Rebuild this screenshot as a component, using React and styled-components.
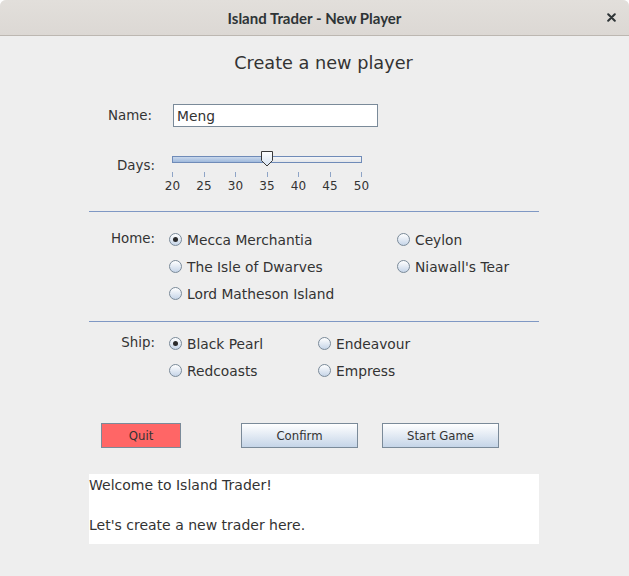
import { useState } from "react";
import styled, { createGlobalStyle } from "styled-components";

const GlobalStyle = createGlobalStyle`
  html, body {
    margin: 0;
    padding: 0;
    background: #ffffff;
  }
  body {
    font-family: "DejaVu Sans", "Liberation Sans", sans-serif;
    color: #333333;
  }
`;

const homes = [
  { id: "mecca", name: "Mecca Merchantia" },
  { id: "ceylon", name: "Ceylon" },
  { id: "dwarves", name: "The Isle of Dwarves" },
  { id: "niawall", name: "Niawall's Tear" },
  { id: "matheson", name: "Lord Matheson Island" },
];

const ships = [
  { id: "pearl", name: "Black Pearl" },
  { id: "endeavour", name: "Endeavour" },
  { id: "redcoasts", name: "Redcoasts" },
  { id: "empress", name: "Empress" },
];

const MIN_DAYS = 20;
const MAX_DAYS = 50;
const ticks = [20, 25, 30, 35, 40, 45, 50];

const Slider = ({ value }) => {
  const pct = ((value - MIN_DAYS) / (MAX_DAYS - MIN_DAYS)) * 100;
  return (
    <SliderBox>
      <TrackArea>
        <Track>
          <Fill style={{ width: `${pct}%` }} />
        </Track>
        <Thumb style={{ left: `${pct}%` }}>
          <svg width="14" height="16" viewBox="0 0 14 16">
            <defs>
              <linearGradient id="thumbFill" x1="0" y1="0" x2="0" y2="1">
                <stop offset="0" stopColor="#ffffff" />
                <stop offset="1" stopColor="#d6e2f0" />
              </linearGradient>
            </defs>
            <path
              d="M1.5 0.5 H12.5 V9.5 L7 15 L1.5 9.5 Z"
              fill="url(#thumbFill)"
              stroke="#3a3a3a"
              strokeWidth="1"
              strokeLinejoin="round"
            />
          </svg>
        </Thumb>
      </TrackArea>
      <Ticks>
        {ticks.map((t) => (
          <Tick key={t} />
        ))}
      </Ticks>
      <TickLabels>
        {ticks.map((t) => (
          <TickLabel key={t}>{t}</TickLabel>
        ))}
      </TickLabels>
    </SliderBox>
  );
};

const RadioOption = ({ label, checked, onSelect }) => (
  <Option onClick={onSelect}>
    <RadioDot $checked={checked} />
    <span>{label}</span>
  </Option>
);

const App = () => {
  const [name, setName] = useState("Meng");
  const [home, setHome] = useState("mecca");
  const [ship, setShip] = useState("pearl");

  return (
    <Window>
      <GlobalStyle />
      <TitleBar>
        <TitleText>Island Trader - New Player</TitleText>
        <CloseButton aria-label="close">
          <svg width="9" height="9" viewBox="0 0 9 9">
            <path
              d="M1.2 1.2 L7.8 7.8 M7.8 1.2 L1.2 7.8"
              stroke="#2e3436"
              strokeWidth="2"
              strokeLinecap="round"
            />
          </svg>
        </CloseButton>
      </TitleBar>

      <Body>
        <Heading>Create a new player</Heading>

        <Content>
          <FieldRow $top={29}>
            <Label $pad={3}>Name:</Label>
            <TextField
              value={name}
              onChange={(e) => setName(e.target.value)}
            />
          </FieldRow>

          <FieldRow $top={24} $align="start">
            <Label $offset={7}>Days:</Label>
            <Slider value={35} />
          </FieldRow>

          <Divider $top={18} />

          <FieldRow $top={14} $align="start">
            <Label $offset={5}>Home:</Label>
            <OptionGrid $col={228}>
              {homes.map((h) => (
                <RadioOption
                  key={h.id}
                  label={h.name}
                  checked={home === h.id}
                  onSelect={() => setHome(h.id)}
                />
              ))}
            </OptionGrid>
          </FieldRow>

          <Divider $top={14} />

          <FieldRow $top={8} $align="start">
            <Label $offset={5}>Ship:</Label>
            <OptionGrid $col={149}>
              {ships.map((s) => (
                <RadioOption
                  key={s.id}
                  label={s.name}
                  checked={ship === s.id}
                  onSelect={() => setShip(s.id)}
                />
              ))}
            </OptionGrid>
          </FieldRow>

          <ButtonRow>
            <Button $danger $width={80}>
              Quit
            </Button>
            <Button $width={117} $gap={60}>
              Confirm
            </Button>
            <Button $width={117} $gap={24}>
              Start Game
            </Button>
          </ButtonRow>

          <MessageBox>
            <p>Welcome to Island Trader!</p>
            <p>&nbsp;</p>
            <p>Let's create a new trader here.</p>
          </MessageBox>
        </Content>
      </Body>
    </Window>
  );
};

export default App;

const Window = styled.div`
  width: 629px;
  height: 576px;
  display: flex;
  flex-direction: column;
  background: #eeeeee;
  border-radius: 6px 6px 0 0;
  overflow: hidden;
`;

const TitleBar = styled.div`
  height: 35px;
  flex-shrink: 0;
  display: flex;
  align-items: center;
  justify-content: center;
  position: relative;
  background: linear-gradient(#e2dfdb, #dcd8d4);
  border-bottom: 1px solid #bcb7b1;
`;

const TitleText = styled.div`
  font-family: Lato, "Noto Sans", sans-serif;
  font-weight: 700;
  font-size: 15px;
  color: #2e3436;
`;

const CloseButton = styled.div`
  position: absolute;
  right: 13px;
  top: 13px;
  width: 9px;
  height: 9px;
  display: flex;
`;

const Body = styled.div`
  flex: 1;
  display: flex;
  flex-direction: column;
`;

const Heading = styled.h1`
  margin: 15px 0 0 18px;
  font-size: 17.7px;
  font-weight: 400;
  line-height: 24px;
  text-align: center;
  color: #333333;
`;

const Content = styled.div`
  margin-left: 89px;
  width: 450px;
  display: flex;
  flex-direction: column;
`;

const FieldRow = styled.div`
  display: grid;
  grid-template-columns: 66px 1fr;
  column-gap: 14px;
  align-items: ${(p) => p.$align || "center"};
  margin-top: ${(p) => p.$top}px;
`;

const Label = styled.div`
  font-size: 13.4px;
  text-align: right;
  padding-right: ${(p) => p.$pad || 0}px;
  margin-top: ${(p) => p.$offset || 0}px;
  line-height: 16px;
  color: #333333;
`;

const TextField = styled.input`
  margin-left: 4px;
  width: 205px;
  height: 23px;
  box-sizing: border-box;
  border: 1px solid #7a8a99;
  background: #ffffff;
  padding: 0 3px;
  font-family: "DejaVu Sans", sans-serif;
  font-size: 13.8px;
  color: #333333;
  outline: none;
`;

const SliderBox = styled.div`
  margin-left: 3px;
  width: 190px;
  display: flex;
  flex-direction: column;
`;

const TrackArea = styled.div`
  height: 16px;
  position: relative;
  display: flex;
  align-items: center;
`;

const Track = styled.div`
  flex: 1;
  height: 7px;
  box-sizing: border-box;
  border: 1px solid #6f8bb8;
  background: linear-gradient(#f4f5f7, #e3e6ea);
  display: flex;
`;

const Fill = styled.div`
  height: 100%;
  background: linear-gradient(#c9d8ec, #9fb9dc);
`;

const Thumb = styled.div`
  position: absolute;
  top: 0;
  width: 14px;
  height: 16px;
  transform: translateX(-50%);
  display: flex;
`;

const Ticks = styled.div`
  margin-top: 5px;
  display: flex;
  justify-content: space-between;
`;

const Tick = styled.div`
  width: 1px;
  height: 5px;
  background: #8ea4c6;
`;

const TickLabels = styled.div`
  margin-top: 2px;
  display: flex;
  justify-content: space-between;
`;

const TickLabel = styled.div`
  width: 1px;
  display: flex;
  justify-content: center;
  font-size: 12px;
  line-height: 14px;
  white-space: nowrap;
  color: #333333;
`;

const Divider = styled.hr`
  margin: ${(p) => p.$top}px 0 0;
  border: none;
  height: 1px;
  background: #7f98c4;
`;

const OptionGrid = styled.div`
  display: grid;
  grid-template-columns: ${(p) => p.$col}px 1fr;
  grid-auto-rows: 27px;
`;

const Option = styled.label`
  display: flex;
  align-items: center;
  gap: 5px;
  font-size: 13.8px;
  color: #333333;
  cursor: pointer;
`;

const RadioDot = styled.span`
  width: 13px;
  height: 13px;
  box-sizing: border-box;
  border-radius: 50%;
  border: 1px solid #7a8a99;
  background: linear-gradient(#ffffff, #c6d5e8);
  display: flex;
  align-items: center;
  justify-content: center;
  flex-shrink: 0;

  &::after {
    content: "";
    width: 5px;
    height: 5px;
    border-radius: 50%;
    background: #2b2b2b;
    display: ${(p) => (p.$checked ? "block" : "none")};
  }
`;

const ButtonRow = styled.div`
  margin-top: 39px;
  padding-left: 12px;
  display: flex;
`;

const Button = styled.button`
  width: ${(p) => p.$width}px;
  height: 25px;
  margin-left: ${(p) => p.$gap || 0}px;
  box-sizing: border-box;
  border: 1px solid #7a8a99;
  border-radius: 0;
  padding: 0;
  font-family: "DejaVu Sans", sans-serif;
  font-size: 11.7px;
  color: #333333;
  background: ${(p) =>
    p.$danger ? "#ff6666" : "linear-gradient(#ffffff, #c5d5e8)"};
`;

const MessageBox = styled.div`
  margin-top: 26px;
  height: 70px;
  background: #ffffff;
  padding-top: 1px;
  box-sizing: border-box;
  font-size: 14px;
  color: #333333;

  p {
    margin: 0;
    line-height: 20px;
  }
`;
